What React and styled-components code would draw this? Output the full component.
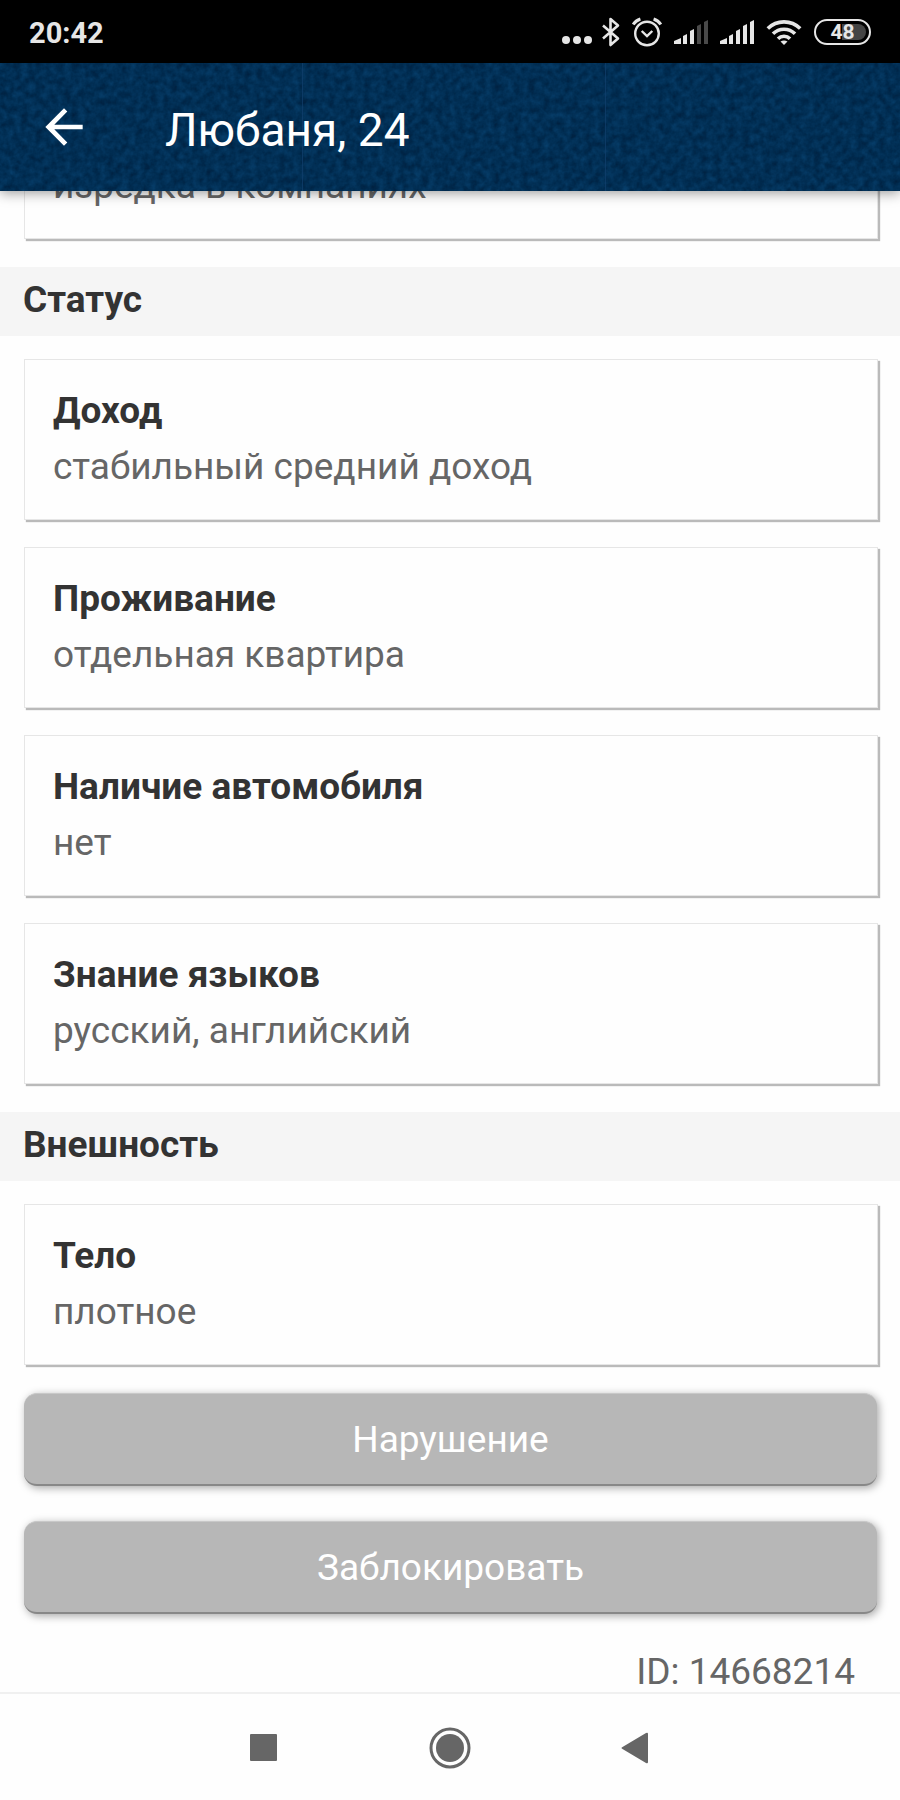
import React from "react";
import styled, { createGlobalStyle } from "styled-components";

const GlobalStyle = createGlobalStyle`
  * {
    box-sizing: border-box;
  }

  body {
    margin: 0;
    background: #fefefe;
    color: #333;
    font-family: Roboto, "Noto Sans", sans-serif;
    font-size: 37px;
  }
`;

const Page = styled.div`
  display: flex;
  flex-direction: column;
  min-height: 100vh;
`;

const StatusBar = styled.div`
  display: flex;
  align-items: center;
  justify-content: space-between;
  height: 63px;
  padding: 0 29px;
  background: #000;
  color: #e6e6e6;
  z-index: 2;

  time {
    padding-top: 2px;
    font-size: 29px;
    font-weight: 700;
    line-height: 32px;
  }
`;

const StatusIcons = styled.div`
  display: flex;
  align-items: center;
  gap: 12px;

  svg {
    display: block;
  }
`;

const Battery = styled.div`
  width: 57px;
  height: 26px;
  border: 2px solid #e6e6e6;
  border-radius: 13px;
  padding: 3px;

  span {
    display: block;
    border-radius: 8px;
    background: linear-gradient(to right, #000 48%, #444 48%);
    font-size: 21px;
    font-weight: 700;
    line-height: 16px;
    text-align: center;
  }
`;

const AppBar = styled.header`
  position: sticky;
  top: 0;
  z-index: 1;
  display: flex;
  align-items: center;
  gap: 73px;
  height: 128px;
  padding: 0 36px;
  background: #022f55;
  box-shadow: 0 2px 12px rgba(0, 0, 0, 0.4);
  color: #fff;

  h1 {
    position: relative;
    margin: 0;
    padding-top: 5px;
    font-size: 46px;
    font-weight: 400;
    line-height: 56px;
  }
`;

const Texture = styled.svg`
  position: absolute;
  inset: 0;
  width: 100%;
  height: 100%;
`;

const BackButton = styled.button`
  position: relative;
  border: 0;
  padding: 0;
  background: none;
  color: inherit;

  svg {
    display: block;
  }
`;

/* the list is scrolled, its first card sits partly under the app bar */
const Content = styled.main`
  display: flex;
  flex-direction: column;
  margin-top: -57px;
`;

const CardList = styled.dl`
  display: flex;
  flex-direction: column;
  gap: 27px;
  margin: 0 22px 28px 24px;
`;

const CardBox = styled.div`
  padding: 23px 28px 24px;
  border: 1px solid #e6e6e6;
  background: #fefefe;
  box-shadow: 2px 2px 1px #bababa;
  line-height: 56px;

  dt {
    font-weight: 700;
  }

  dd {
    margin: 0;
    color: #666;
  }
`;

const SectionTitle = styled.h2`
  margin: 0 0 23px;
  padding: 0 23px 3px;
  background: #f5f5f5;
  font-size: 37px;
  font-weight: 700;
  line-height: 66px;
`;

const Actions = styled.div`
  display: flex;
  flex-direction: column;
  gap: 35px;
  margin: 0 23px 0 24px;
`;

const ActionButton = styled.button`
  height: 93px;
  border: 0;
  border-top: 1px solid #c8c8c8;
  border-bottom: 2px solid #888;
  border-radius: 13px;
  background: #b7b7b7;
  box-shadow: 2px 2px 8px rgba(0, 0, 0, 0.35);
  color: #fff;
  font: inherit;
`;

const ProfileId = styled.p`
  margin: 38px 45px 0;
  color: #666;
  line-height: 40px;
  text-align: right;
`;

const NavBar = styled.nav`
  position: sticky;
  bottom: 0;
  display: flex;
  align-items: center;
  justify-content: center;
  gap: 144px;
  height: 109px;
  margin-top: auto;
  border-top: 2px solid #f0f0f0;
  background: #fefefe;
`;

const NavButton = styled.button`
  width: 42px;
  height: 42px;
  border: 0;
  padding: 0;
  background: none;

  svg {
    display: block;
    fill: #666;
  }
`;

const habits = [{ value: "изредка в компаниях" }];

const status = [
  { title: "Доход", value: "стабильный средний доход" },
  { title: "Проживание", value: "отдельная квартира" },
  { title: "Наличие автомобиля", value: "нет" },
  { title: "Знание языков", value: "русский, английский" },
];

const appearance = [{ title: "Тело", value: "плотное" }];

const Cards = ({ items }) => (
  <CardList>
    {items.map(({ title, value }) => (
      <CardBox key={value}>
        {title && <dt>{title}</dt>}
        <dd>{value}</dd>
      </CardBox>
    ))}
  </CardList>
);

const Signal = ({ level }) => (
  <svg width="34" height="26" viewBox="0 0 34 26">
    {[
      "M0 25v-3l7-3v6z",
      "M9 25v-8l4-2v10z",
      "M16 25V12l4-2v15z",
      "M23 25V7l4-2v20z",
      "M30 25V3l4-2v24z",
    ].map((d, i) => (
      <path key={d} d={d} fill={i < level ? "#e6e6e6" : "#4a4a4a"} />
    ))}
  </svg>
);

const App = () => {
  return (
    <>
      <GlobalStyle />
      <Page>
        <StatusBar>
          <time>20:42</time>
          <StatusIcons>
            <svg width="58" height="30" viewBox="0 0 58 30">
              <g fill="#e6e6e6">
                <circle cx="4" cy="23" r="4" />
                <circle cx="15" cy="23" r="4" />
                <circle cx="26" cy="23" r="4" />
              </g>
              <path
                d="M41 8.500l15 13-7.500 6.500V2l7.500 6.500-15 13"
                fill="none"
                stroke="#e6e6e6"
                strokeWidth="2.6"
                strokeLinejoin="round"
              />
            </svg>
            <svg width="30" height="30" viewBox="0 0 30 30">
              <g fill="none" stroke="#e6e6e6" strokeWidth="2.4">
                <circle cx="15" cy="16.500" r="11.800" />
                <path d="M9.700 14l5.300 5 5.300-5" />
                <path d="M1.200 7.500q2.500-4 7.200-5.500M28.800 7.500q-2.500-4-7.200-5.500" strokeWidth="3" />
              </g>
            </svg>
            <Signal level={3} />
            <Signal level={5} />
            <svg width="36" height="28" viewBox="0 0 36 28">
              <g fill="none" stroke="#e6e6e6" strokeWidth="3.600">
                <path d="M1.800 10.500a23 23 0 0 1 32.400 0" />
                <path d="M7 15.800a15.500 15.500 0 0 1 22 0" />
                <path d="M12 20.800a8.500 8.500 0 0 1 12 0" />
              </g>
              <path d="M14.500 23.500q3.500-2 7 0L18 27z" fill="#e6e6e6" />
            </svg>
            <Battery>
              <span>48</span>
            </Battery>
          </StatusIcons>
        </StatusBar>
        <AppBar>
          <Texture aria-hidden="true">
            <filter id="cloth" x="0" y="0" width="100%" height="100%" colorInterpolationFilters="sRGB">
              <feTurbulence type="fractalNoise" baseFrequency="0.14" numOctaves="3" seed="4" />
              <feColorMatrix values="0.05 0 0 0 -0.02  0.14 0 0 0 0.114  0.2 0 0 0 0.233  0 0 0 0 1" />
            </filter>
            <rect width="100%" height="100%" filter="url(#cloth)" />
            <path d="M302.500 0v128M605.500 0v128" stroke="#12406e" opacity="0.7" />
          </Texture>
          <BackButton aria-label="Назад">
            <svg width="56" height="56" viewBox="0 0 24 24" fill="currentColor">
              <path d="M20 11H7.830l5.590-5.590L12 4l-8 8 8 8 1.410-1.410L7.830 13H20v-2z" />
            </svg>
          </BackButton>
          <h1>Любаня, 24</h1>
        </AppBar>
        <Content>
          <Cards items={habits} />
          <SectionTitle>Статус</SectionTitle>
          <Cards items={status} />
          <SectionTitle>Внешность</SectionTitle>
          <Cards items={appearance} />
          <Actions>
            <ActionButton>Нарушение</ActionButton>
            <ActionButton>Заблокировать</ActionButton>
          </Actions>
          <ProfileId>ID: 14668214</ProfileId>
        </Content>
        <NavBar>
          <NavButton aria-label="Недавние">
            <svg width="42" height="42" viewBox="0 0 42 42">
              <rect x="7" y="7" width="27" height="27" rx="1" />
            </svg>
          </NavButton>
          <NavButton aria-label="Домой">
            <svg width="42" height="42" viewBox="0 0 42 42">
              <circle cx="21" cy="21" r="19" fill="none" stroke="#666" strokeWidth="3" />
              <circle cx="21" cy="21" r="14" />
            </svg>
          </NavButton>
          <NavButton aria-label="Назад">
            <svg width="42" height="42" viewBox="0 0 42 42">
              <path d="M7.500 20L31 6q2-1 2 1v28q0 2-2 1L7.500 22q-2-1 0-2z" />
            </svg>
          </NavButton>
        </NavBar>
      </Page>
    </>
  );
};

export default App;
